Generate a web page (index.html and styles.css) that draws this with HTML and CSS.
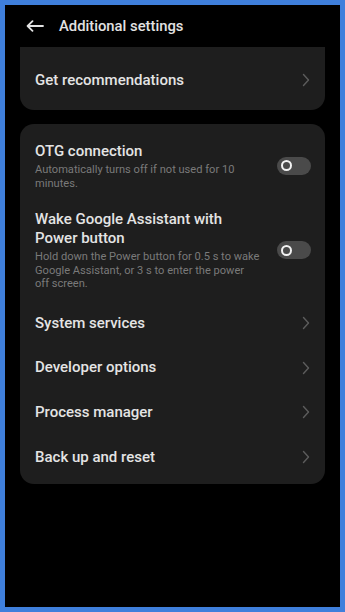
FILE: index.html
```html
<!DOCTYPE html>
<html lang="en">
<head>
    <meta charset="UTF-8">
    <meta name="viewport" content="width=device-width, initial-scale=1.0">
    <title>Additional settings</title>
    <link rel="stylesheet" href="styles.css">
</head>
<body>
    <div class="frame">
        <div class="header">
            <svg class="back" width="18" height="12" viewBox="0 0 18 12">
                <path d="M17 6H1.8M6.5 1.2L1.6 6l4.9 4.8" fill="none" stroke="#e2e2e2" stroke-width="1.8" stroke-linecap="round" stroke-linejoin="round"/>
            </svg>
            <h1>Additional settings</h1>
        </div>

        <div class="content">
            <div class="card card-top">
                <div class="row">
                    <span class="title">Get recommendations</span>
                    <svg class="chevron" width="8" height="14" viewBox="0 0 8 14"><path d="M1.5 1.5L6.5 7l-5 5.5" fill="none" stroke="#5c5c5c" stroke-width="1.4" stroke-linecap="round" stroke-linejoin="round"/></svg>
                </div>
            </div>

            <div class="card">
                <div class="row toggle-row">
                    <div class="text">
                        <div class="title">OTG connection</div>
                        <div class="sub">Automatically turns off if not used for 10 minutes.</div>
                    </div>
                    <div class="switch"><span class="knob"></span></div>
                </div>
                <div class="row toggle-row">
                    <div class="text">
                        <div class="title">Wake Google Assistant with Power button</div>
                        <div class="sub">Hold down the Power button for 0.5 s to wake Google Assistant, or 3 s to enter the power<br>off screen.</div>
                    </div>
                    <div class="switch"><span class="knob"></span></div>
                </div>
                <div class="row">
                    <span class="title">System services</span>
                    <svg class="chevron" width="8" height="14" viewBox="0 0 8 14"><path d="M1.5 1.5L6.5 7l-5 5.5" fill="none" stroke="#5c5c5c" stroke-width="1.4" stroke-linecap="round" stroke-linejoin="round"/></svg>
                </div>
                <div class="row">
                    <span class="title">Developer options</span>
                    <svg class="chevron" width="8" height="14" viewBox="0 0 8 14"><path d="M1.5 1.5L6.5 7l-5 5.5" fill="none" stroke="#5c5c5c" stroke-width="1.4" stroke-linecap="round" stroke-linejoin="round"/></svg>
                </div>
                <div class="row">
                    <span class="title">Process manager</span>
                    <svg class="chevron" width="8" height="14" viewBox="0 0 8 14"><path d="M1.5 1.5L6.5 7l-5 5.5" fill="none" stroke="#5c5c5c" stroke-width="1.4" stroke-linecap="round" stroke-linejoin="round"/></svg>
                </div>
                <div class="row">
                    <span class="title">Back up and reset</span>
                    <svg class="chevron" width="8" height="14" viewBox="0 0 8 14"><path d="M1.5 1.5L6.5 7l-5 5.5" fill="none" stroke="#5c5c5c" stroke-width="1.4" stroke-linecap="round" stroke-linejoin="round"/></svg>
                </div>
            </div>
        </div>
    </div>
</body>
</html>
```

FILE: styles.css
```css
body {
    margin: 0;
    padding: 0;
    background: #3f7fdc;
    font-family: 'Roboto', 'Noto Sans', sans-serif;
}

.frame {
    width: 345px;
    height: 612px;
    box-sizing: border-box;
    border: 5px solid #3f7fdc;
    background: #000;
    overflow: hidden;
}

.header {
    height: 42px;
    display: flex;
    align-items: center;
    padding-left: 21px;
}

.back {
    margin-right: 15px;
}

h1 {
    margin: 0;
    font-size: 14.8px;
    font-weight: 500;
    color: #e2e2e2;
}

.content {
    padding: 0 15px;
}

.card {
    background: #1e1e1e;
    border-radius: 14px;
    padding: 8px 14px 5px 15px;
    margin-bottom: 14px;
}

.card-top {
    border-radius: 0 0 14px 14px;
    padding-top: 11px;
    padding-bottom: 7px;
}

.row {
    display: flex;
    align-items: center;
    justify-content: space-between;
    min-height: 44.7px;
}

.title {
    font-size: 15px;
    font-weight: 500;
    color: #e4e4e4;
    line-height: 18.5px;
}

.chevron {
    margin-right: 1px;
}

.toggle-row {
    padding: 10px 0;
    gap: 12px;
}

.text {
    flex: 1;
    max-width: 226.5px;
}

.sub {
    margin-top: 3px;
    font-size: 11.1px;
    line-height: 13.5px;
    color: #7a7a7a;
}

.switch {
    width: 34px;
    height: 18px;
    border-radius: 9px;
    background: #4a4a4a;
    flex-shrink: 0;
    display: flex;
    align-items: center;
    padding-left: 4px;
    box-sizing: border-box;
}

.knob {
    width: 11px;
    height: 11px;
    box-sizing: border-box;
    border-radius: 50%;
    border: 2.5px solid #f2f2f2;
    background: #4a4a4a;
}
```
